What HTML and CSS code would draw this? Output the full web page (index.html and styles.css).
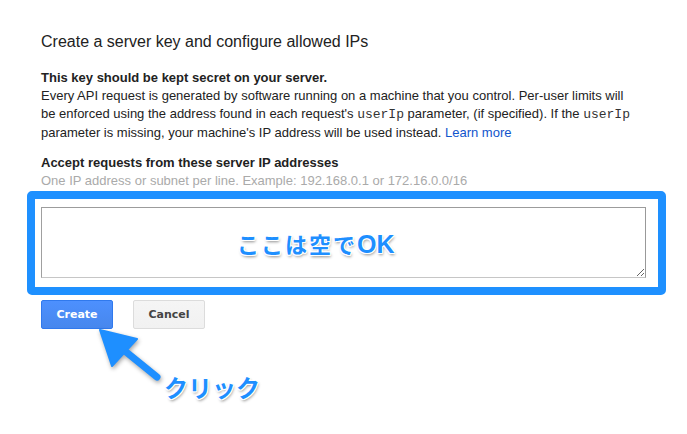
FILE: index.html
```html
<!DOCTYPE html>
<html lang="en">
<head>
<meta charset="utf-8">
<title>Create a server key</title>
<link rel="stylesheet" href="styles.css">
</head>
<body>
<div class="page">
  <h1 class="title">Create a server key and configure allowed IPs</h1>
  <div class="intro">
    <div class="strong">This key should be kept secret on your server.</div>
    <div>Every API request is generated by software running on a machine that you control. Per-user limits will<br>be enforced using the address found in each request's <code>userIp</code> parameter, (if specified). If the <code>userIp</code><br>parameter is missing, your machine's IP address will be used instead. <a class="link" href="#">Learn more</a></div>
  </div>
  <div class="label">Accept requests from these server IP addresses</div>
  <div class="hint">One IP address or subnet per line. Example: 192.168.0.1 or 172.16.0.0/16</div>
  <div class="field">
    <textarea class="ips"></textarea>
    <div class="highlight"></div>
    <div class="note"><span class="note-ja">ここは空で</span><span class="note-en">OK</span></div>
  </div>
  <div class="actions">
    <button class="btn btn-primary">Create</button>
    <button class="btn btn-default">Cancel</button>
  </div>
  <svg class="arrow" width="687" height="434" viewBox="0 0 687 434">
    <line x1="120" y1="347" x2="157" y2="377" stroke="#1e8fff" stroke-width="7" stroke-linecap="round"/>
    <polygon points="100,330 137,339 112,366" fill="#1e8fff" stroke="#1e8fff" stroke-width="2" stroke-linejoin="round"/>
  </svg>
  <div class="click">クリック</div>
</div>
</body>
</html>
```
FILE: styles.css
```css
html, body {
  margin: 0;
  padding: 0;
  background: #fff;
}
.page {
  position: relative;
  width: 687px;
  height: 434px;
  padding: 32px 41px 0 41px;
  box-sizing: border-box;
  font-family: "Liberation Sans", Arial, sans-serif;
  color: #222;
  overflow: hidden;
}
.title {
  margin: 0;
  font-size: 16px;
  line-height: 20px;
  font-weight: normal;
  color: #222;
}
.intro {
  margin-top: 17px;
  font-size: 13px;
  line-height: 18px;
}
.strong {
  font-weight: bold;
}
code {
  font-family: "Liberation Mono", "Courier New", monospace;
  font-size: 13px;
  color: #333;
}
.link {
  color: #15c;
  text-decoration: none;
}
.label {
  margin-top: 12px;
  font-size: 13px;
  line-height: 18px;
  font-weight: bold;
}
.hint {
  font-size: 13px;
  line-height: 18px;
  color: #aaa;
}
.field {
  position: relative;
  margin-top: 17px;
  width: 605px;
  height: 71px;
}
.ips {
  display: block;
  width: 605px;
  height: 71px;
  box-sizing: border-box;
  margin: 0;
  padding: 4px;
  border: 1px solid;
  border-color: #9c9c9c #999 #c6c6c6 #a0a0a0;
  border-radius: 0;
  background: #fff;
  font-family: "Liberation Sans", Arial, sans-serif;
  font-size: 13px;
  resize: both;
  outline: none;
}
.highlight {
  position: absolute;
  left: -14px;
  top: -16px;
  right: -20px;
  bottom: -17px;
  border: 8px solid #1e90ff;
  border-radius: 5px;
  pointer-events: none;
}
.note {
  position: absolute;
  left: 196px;
  top: 22px;
  font-weight: bold;
  line-height: 28px;
  color: #1e8fff;
  white-space: nowrap;
  text-shadow: 1px 0 0 #fff, -1px 0 0 #fff, 0 1px 0 #fff, 0 -1px 0 #fff,
    1px 1px 0 #fff, -1px -1px 0 #fff, 1px -1px 0 #fff, -1px 1px 0 #fff,
    1px 2px 3px rgba(0, 0, 0, 0.45);
}
.note-ja {
  font-family: "Noto Sans CJK JP", sans-serif;
  font-size: 22px;
  letter-spacing: 2px;
}
.note-en {
  font-family: "Liberation Sans", Arial, sans-serif;
  font-size: 25px;
}
.actions {
  display: flex;
  gap: 20px;
  margin-top: 22px;
}
.btn {
  width: 72px;
  height: 29px;
  box-sizing: border-box;
  border-radius: 2px;
  font-family: "DejaVu Sans", Verdana, sans-serif;
  font-weight: bold;
  font-size: 11px;
  padding: 0;
}
.btn-primary {
  color: #fff;
  background: linear-gradient(#4d90fe, #4787ed);
  border: 1px solid #3079ed;
}
.btn-default {
  color: #444;
  background: linear-gradient(#f5f5f5, #f1f1f1);
  border: 1px solid #dcdcdc;
}
.arrow {
  position: absolute;
  left: 0;
  top: 0;
  pointer-events: none;
  filter: drop-shadow(1px 2px 2px rgba(0, 0, 0, 0.35));
}
.click {
  position: absolute;
  left: 164px;
  top: 371px;
  font-family: "Noto Sans CJK JP", sans-serif;
  font-weight: bold;
  font-size: 24px;
  line-height: 32px;
  color: #1e8fff;
  text-shadow: 1px 0 0 #fff, -1px 0 0 #fff, 0 1px 0 #fff, 0 -1px 0 #fff,
    1px 1px 0 #fff, -1px -1px 0 #fff, 1px -1px 0 #fff, -1px 1px 0 #fff,
    1px 2px 3px rgba(0, 0, 0, 0.45);
}
```
